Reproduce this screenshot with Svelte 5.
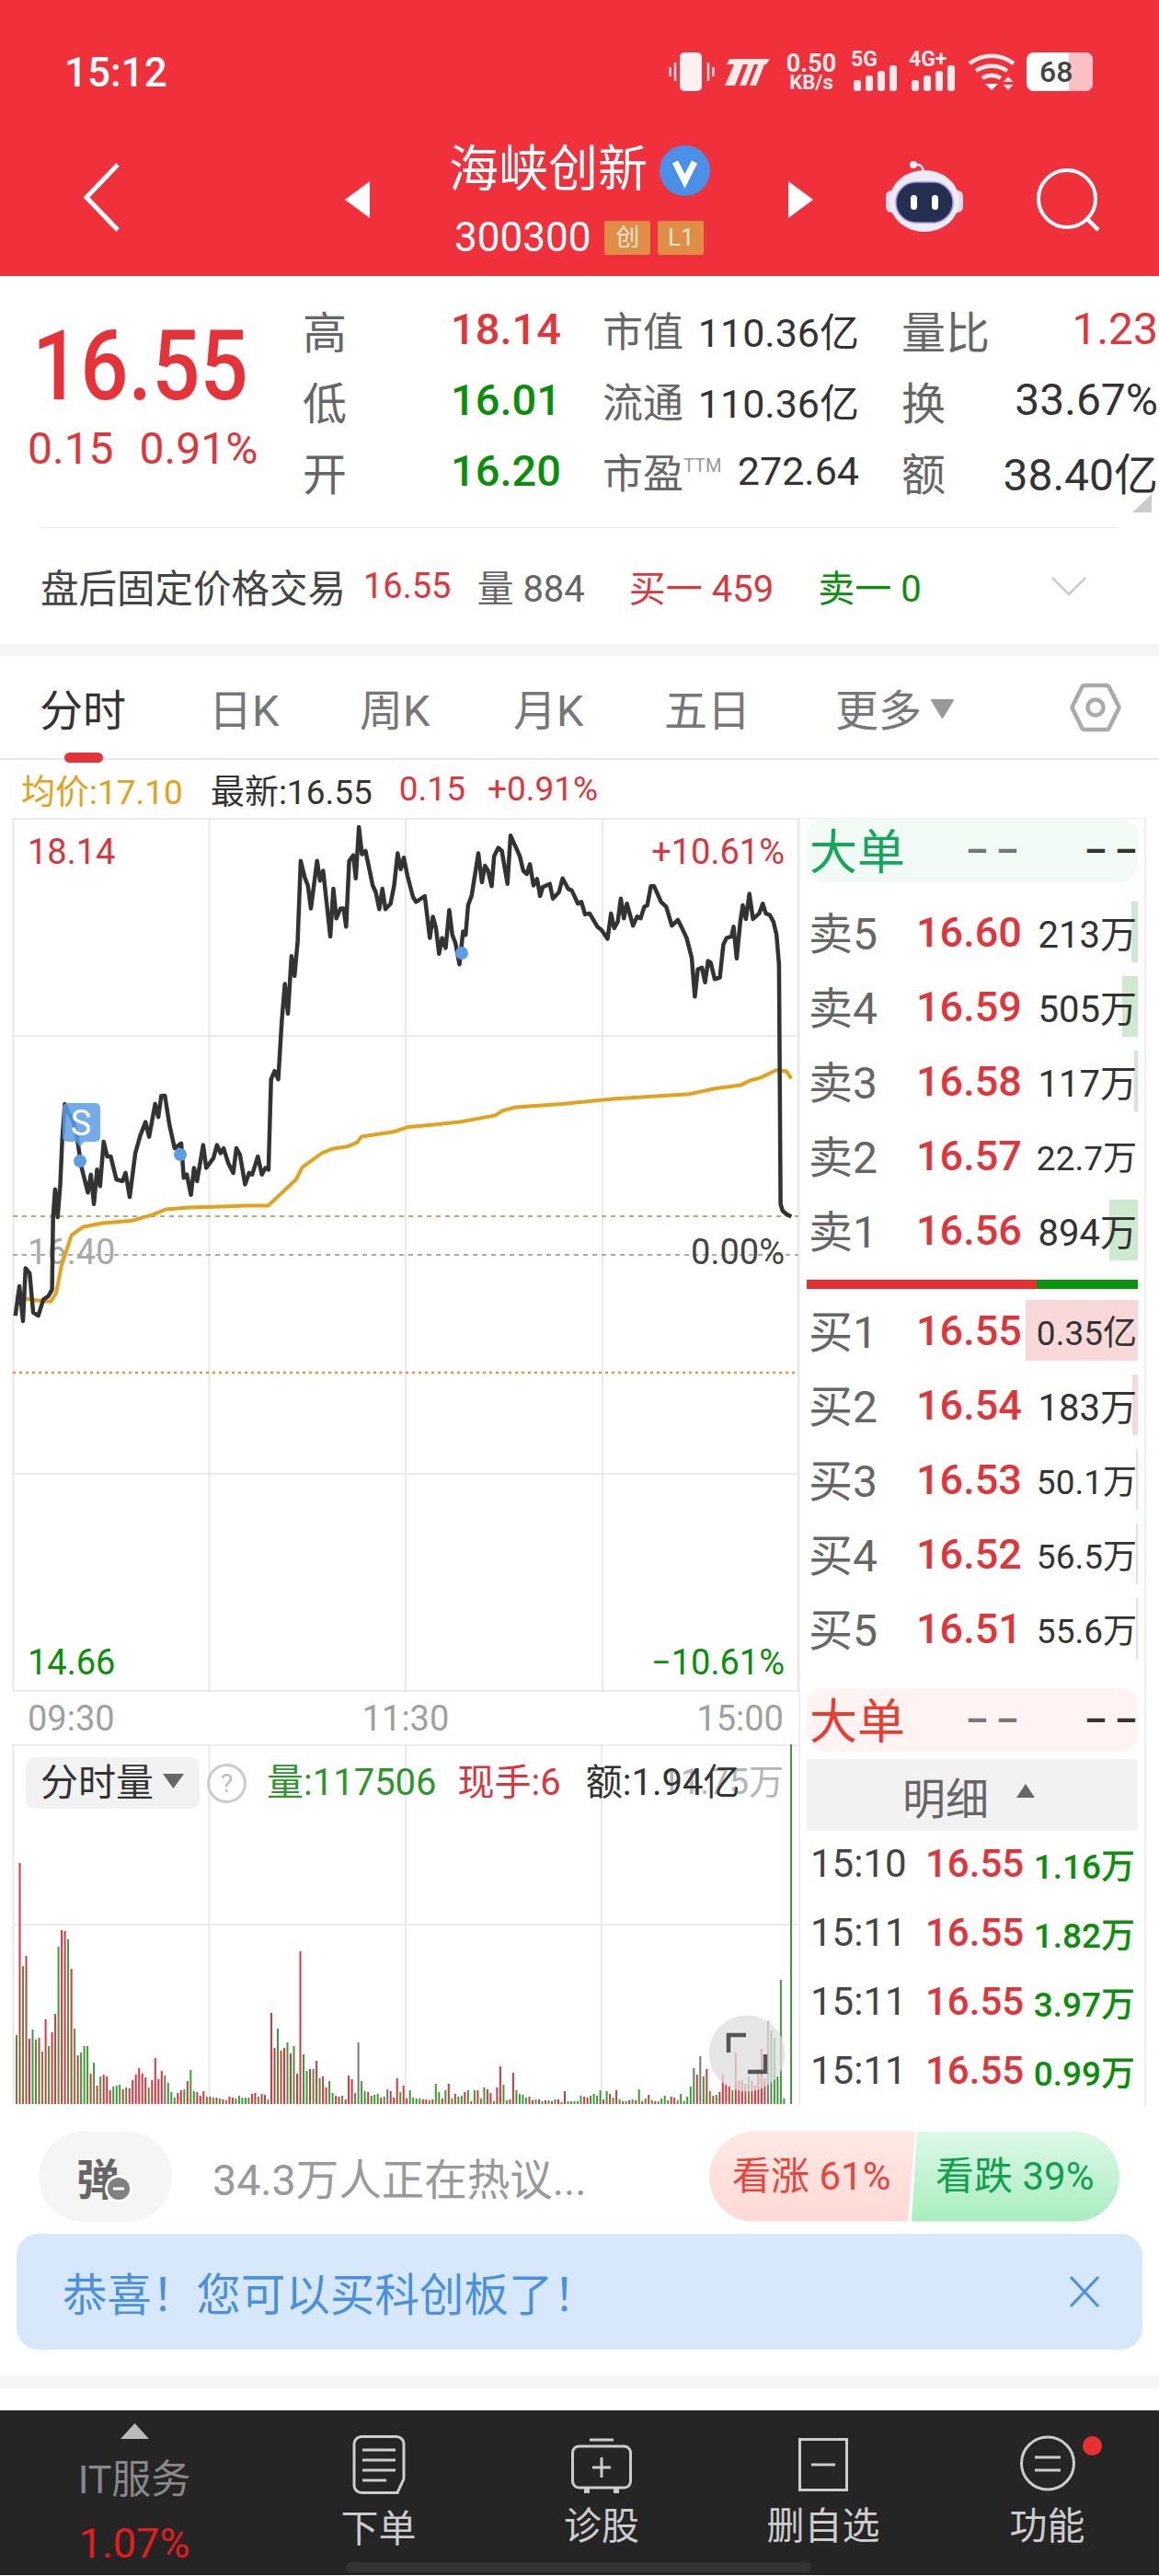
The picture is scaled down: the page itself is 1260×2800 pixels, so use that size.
<script>
    // price line, traced off the chart (crop units, converted below)
    const priceRaw = [30,1600,38,1510,45,1616,50,1455,58,1470,65,1590,75,1600,85,1550,95,1540,102,1520,104,1300,108,1215,113,1300,118,1200,122,1060,127,955,135,985,142,1000,150,1050,155,1100,160,1150,172,1225,178,1170,184,1260,190,1155,196,1205,203,1070,210,1115,217,1115,228,1185,240,1190,246,1165,254,1238,265,1105,275,1050,285,1010,292,1055,304,955,310,995,316,930,323,930,332,1020,342,1090,355,1075,360,1180,366,1170,374,1232,380,1150,386,1190,398,1080,404,1150,418,1120,425,1080,432,1105,438,1090,447,1135,457,1165,463,1090,470,1110,480,1200,488,1165,494,1170,505,1115,513,1170,520,1150,526,1155,531,880,538,855,545,880,552,700,558,590,564,680,571,505,577,565,583,460,589,215,597,265,603,290,609,360,621,215,627,275,633,245,647,445,653,300,659,390,667,360,673,360,678,415,684,215,692,198,697,268,703,112,709,195,716,185,730,290,736,310,743,362,749,300,755,362,765,345,772,290,779,192,785,240,791,205,798,260,809,325,815,340,832,322,842,450,848,385,854,420,860,498,866,450,873,480,880,365,886,440,892,465,900,530,907,430,912,440,917,350,924,320,930,260,937,192,944,280,950,230,956,245,963,292,968,200,976,175,983,185,994,285,1000,138,1008,165,1018,200,1025,245,1032,255,1038,225,1045,290,1052,270,1058,322,1063,295,1077,285,1083,330,1095,310,1102,268,1113,300,1120,305,1132,345,1139,340,1146,378,1155,375,1170,415,1178,425,1190,452,1197,375,1203,420,1210,400,1216,330,1222,390,1228,345,1240,412,1248,385,1255,390,1262,355,1268,350,1275,292,1281,292,1295,340,1305,355,1316,412,1328,395,1336,420,1345,450,1355,510,1361,628,1367,545,1375,540,1381,585,1387,520,1392,525,1400,575,1410,570,1417,470,1423,450,1433,445,1437,415,1443,512,1450,400,1455,350,1461,392,1468,315,1475,392,1487,375,1494,345,1500,375,1508,380,1515,400,1521,440,1526,530,1529,1260,1533,1280,1540,1290,1550,1298];
    const avgRaw = [30,1545,60,1550,85,1556,100,1556,110,1530,120,1450,140,1355,162,1330,200,1318,260,1310,300,1292,325,1276,370,1270,420,1268,480,1265,525,1265,580,1185,592,1148,630,1105,650,1092,680,1085,700,1072,708,1055,770,1040,800,1025,850,1018,900,1010,970,990,985,975,1010,965,1100,955,1200,940,1350,925,1400,908,1450,898,1470,883,1490,875,1520,852,1540,855,1550,878];

    function toPoints(raw) {
        let out = [];
        for (let i = 0; i < raw.length; i += 2) {
            out.push((raw[i] * 0.555).toFixed(1) + "," + (860 + raw[i + 1] * 0.357).toFixed(1));
        }
        return out.join(" ");
    }
    const pricePts = toPoints(priceRaw);
    const avgPts = toPoints(avgRaw);

    const volRaw = "g75 r262 g150 r161 r71 g81 g70 r72 g57 r92 g63 r78 r98 g171 r189 r188 g179 r147 g82 r53 g56 g63 g63 r33 g45 r20 g30 r32 r30 r15 g19 g20 g21 r16 g18 r17 r26 r32 r39 r33 r29 g18 r26 r50 r27 r36 k31 g23 g13 g7 r12 r15 g16 r25 g37 g14 r13 r9 r14 g8 r8 g7 r7 g6 r5 g4 r8 r7 g6 g9 g7 g7 g7 r11 r12 g8 r11 r10 g5 r99 r61 g82 r58 r61 g67 r55 g63 r33 r166 g54 g36 r38 g38 r47 g28 r30 r18 g25 g12 r9 r8 g9 r5 r31 r27 g12 k67 g25 g14 r13 g9 g10 g11 r7 g8 k16 r14 r7 r28 g13 r20 r6 g15 g7 g6 g6 r5 r5 g4 r5 g22 g13 r6 g15 r22 g6 r11 g8 g9 r13 g15 r3 g15 r15 g6 g18 r16 r12 g3 r18 r41 g21 g4 r5 r34 g15 g11 g10 g7 r8 r4 g5 r5 g3 r4 g4 r3 g5 r5 r2 r14 g3 g3 g3 g3 g9 r8 r7 g9 g11 g9 g15 r5 g14 r11 g7 r15 g5 r3 g3 r4 g5 r4 g16 r3 g6 r10 g4 r3 g3 g6 g9 g4 r8 r7 g4 g11 g3 g8 g19 g39 r32 k52 g30 r38 g14 r9 g10 r13 r32 r22 r20 g15 r56 r25 r26 r22 g30 r25 r20 r38 r60 r28 k90 g80 g72 g30 g135 g6";
    const volColors = { r: "#d9363e", g: "#3f9a3a", k: "#777" };
    const volBars = volRaw.split(" ").map((s, i) => ({
        x: (17 + i * 3.506).toFixed(1),
        h: +s.slice(1),
        c: volColors[s[0]],
    }));

    const stats = [
        { l: "高", v: "18.14", vc: "red", l2: "市值", v2: "110.36亿", l3: "量比", v3: "1.23", v3c: "red" },
        { l: "低", v: "16.01", vc: "green", l2: "流通", v2: "110.36亿", l3: "换", v3: "33.67%", v3c: "" },
        { l: "开", v: "16.20", vc: "green", l2: "市盈", ttm: true, v2: "272.64", l3: "额", v3: "38.40亿", v3c: "" },
    ];

    const tabs = ["分时", "日K", "周K", "月K", "五日"];

    const sells = [
        { l: "卖", n: 5, p: "16.60", v: "213万", w: 7 },
        { l: "卖", n: 4, p: "16.59", v: "505万", w: 17 },
        { l: "卖", n: 3, p: "16.58", v: "117万", w: 4 },
        { l: "卖", n: 2, p: "16.57", v: "22.7万", w: 0, small: true },
        { l: "卖", n: 1, p: "16.56", v: "894万", w: 31 },
    ];
    const buys = [
        { l: "买", n: 1, p: "16.55", v: "0.35亿", w: 122, small: true },
        { l: "买", n: 2, p: "16.54", v: "183万", w: 6 },
        { l: "买", n: 3, p: "16.53", v: "50.1万", w: 2, small: true },
        { l: "买", n: 4, p: "16.52", v: "56.5万", w: 2, small: true },
        { l: "买", n: 5, p: "16.51", v: "55.6万", w: 2, small: true },
    ];
    const ticks = [
        { t: "15:10", p: "16.55", v: "1.16万" },
        { t: "15:11", p: "16.55", v: "1.82万" },
        { t: "15:11", p: "16.55", v: "3.97万" },
        { t: "15:11", p: "16.55", v: "0.99万" },
    ];
</script>

<div class="page">
    <header class="head">
        <div class="status">
            <span class="clock">15:12</span>
            <div class="sicons">
                <svg class="s-vib" width="50" height="42" viewBox="0 0 50 42">
                    <rect x="12" y="0" width="24" height="42" rx="5" fill="#fff1f1" />
                    <path d="M7 11v20M1.500 16v10M43 11v20M48.500 16v10" stroke="#ffdcdc" stroke-width="2.500" />
                </svg>
                <svg class="s-m" width="49" height="29" viewBox="0 0 49 29">
                    <path d="M5 0h44l-4 6h-2l-9 23h-7l9-23h-4l-9 23h-7l9-23h-5L11 29H0L10 6H2z" fill="#ffeaea" />
                </svg>
                <div class="s-speed"><span>0.50</span><span>KB/s</span></div>
                <div class="s-net">
                    <span>5G</span>
                    <svg width="47" height="28" viewBox="0 0 47 28"><g fill="#ffeaea"><rect x="0" y="16" width="8" height="12" rx="3" /><rect x="13" y="11" width="8" height="17" rx="3" /><rect x="26" y="6" width="8" height="22" rx="3" /><rect x="39" y="0" width="8" height="28" rx="3" /></g></svg>
                </div>
                <div class="s-net n2">
                    <span>4G+</span>
                    <svg width="47" height="28" viewBox="0 0 47 28"><g fill="#ffeaea"><rect x="0" y="16" width="8" height="12" rx="3" /><rect x="13" y="11" width="8" height="17" rx="3" /><rect x="26" y="6" width="8" height="22" rx="3" /><rect x="39" y="0" width="8" height="28" rx="3" /></g></svg>
                </div>
                <svg class="s-wifi" width="52" height="42" viewBox="0 0 52 42">
                    <path d="M2 12c14-11 34-11 48 0M9 20c10-7 24-7 34 0M16 28c6-4 14-4 20 0" fill="none" stroke="#ffeaea" stroke-width="4.500" />
                    <path d="M19 34h14l-7 7z" fill="#fff" />
                    <path d="M44 26l5.500 6h-11zM38.500 35h11L44 41z" fill="#ffe0e0" />
                </svg>
                <div class="s-bat"><i></i><b>68</b></div>
            </div>
        </div>
        <nav class="topnav">
            <svg class="back" width="39" height="75" viewBox="0 0 39 75">
                <path d="M37 2 3 37.500 37 73" fill="none" stroke="#fff" stroke-width="5" />
            </svg>
            <svg class="tri-l" width="27" height="40" viewBox="0 0 27 40"><path d="M27 0v40L0 20z" fill="#fff" /></svg>
            <div class="title">
                <div class="name"><span>海峡创新</span>
                    <svg width="55" height="55" viewBox="0 0 55 55">
                        <circle cx="27.500" cy="27.500" r="27.500" fill="#4a90e8" />
                        <path d="M17 18l10.500 21L38 18" fill="none" stroke="#fff" stroke-width="7" />
                    </svg>
                </div>
                <div class="code"><span>300300</span><em>创</em><em>L1</em></div>
            </div>
            <svg class="tri-r" width="27" height="40" viewBox="0 0 27 40"><path d="M0 0v40l27-20z" fill="#fff" /></svg>
            <svg class="robot" width="84" height="78" viewBox="0 0 84 78">
                <path d="M31 4c6-1 9 2 10 7" fill="none" stroke="#e6e2f6" stroke-width="2.500" />
                <circle cx="30" cy="4" r="4" fill="#f1eefb" />
                <rect x="0" y="32" width="84" height="24" rx="6" fill="#dcd9f0" />
                <ellipse cx="42" cy="43.500" rx="38" ry="33.500" fill="#ecebfa" />
                <rect x="11" y="23" width="62" height="44" rx="22" fill="#252f50" stroke="#9c8cea" stroke-width="1.500" />
                <rect x="27" y="37" width="7" height="16" rx="3.500" fill="#fff" />
                <rect x="50" y="37" width="7" height="16" rx="3.500" fill="#fff" />
            </svg>
            <svg class="search" width="70" height="72" viewBox="0 0 70 72">
                <circle cx="33" cy="33" r="31" fill="none" stroke="#fff" stroke-width="4" />
                <path d="M55 55l12 12" stroke="#fff" stroke-width="4.500" />
            </svg>
        </nav>
    </header>

    <section class="quote">
        <div class="price-col">
            <div class="big">16.55</div>
            <div class="chg"><span>0.15</span><span>0.91%</span></div>
        </div>
        <div class="stat-grid">
            {#each stats as s}
                <span class="s-l">{s.l}</span>
                <span class="s-v {s.vc}">{s.v}</span>
                <span class="s-mid">
                    <span class="m-l">{s.l2}{#if s.ttm}<sup>TTM</sup>{/if}</span>
                    <span class="m-v">{s.v2}</span>
                </span>
                <span class="s-last">
                    <span class="s-l">{s.l3}</span>
                    <span class="l-v {s.v3c}">{s.v3}</span>
                </span>
            {/each}
        </div>
        <svg class="corner" width="21" height="20" viewBox="0 0 21 20"><path d="M21 0v20H0z" fill="#ccc" /></svg>
    </section>
    <div class="divider"></div>
    <section class="after">
        <span class="a-t">盘后固定价格交易</span>
        <span class="red a-p">16.55</span>
        <span class="a-q">量 884</span>
        <span class="red a-b">买一 459</span>
        <span class="green a-s">卖一 0</span>
        <svg class="a-chev" width="38" height="21" viewBox="0 0 38 21"><path d="M1 1l18 18L37 1" fill="none" stroke="#ccc" stroke-width="2.500" /></svg>
    </section>
    <div class="band"></div>

    <section class="tabs">
        {#each tabs as t, i}
            <span class="tab" class:active={i === 0}>{t}</span>
        {/each}
        <span class="tab more">更多<svg width="25" height="21" viewBox="0 0 25 21"><path d="M1 1h23L12.500 20z" fill="#999" stroke="#999" stroke-width="2" stroke-linejoin="round" /></svg></span>
        <svg class="hex" width="56" height="54" viewBox="0 0 56 54">
            <path d="M16 3h24a3 3 0 0 1 2.600 1.500L53 25.500a3 3 0 0 1 0 3L42.600 49.500A3 3 0 0 1 40 51H16a3 3 0 0 1-2.600-1.500L3 28.500a3 3 0 0 1 0-3L13.400 4.500A3 3 0 0 1 16 3z" fill="none" stroke="#aaa" stroke-width="4.500" />
            <circle cx="28" cy="27" r="8.500" fill="none" stroke="#aaa" stroke-width="4.500" />
        </svg>
    </section>

    <div class="info">
        <span class="avg">均价:17.10</span>
        <span class="last">最新:16.55</span>
        <span class="red inf-chg">0.15</span>
        <span class="red inf-pct">+0.91%</span>
    </div>

    <main class="main">
        <div class="left">
            <svg class="chart" width="868" height="950" viewBox="0 890 868 950">
                <g stroke="#e4e4e4" stroke-width="1.500" fill="none">
                    <path d="M14 890.800H868M14 1839H868" stroke-width="2.500" stroke="#ececec" />
                    <path d="M14.500 890V1840M227.500 890V1840M441 890V1840M655 890V1840M867.500 890V1840" />
                    <path d="M14 1127H868M14 1603H868" />
                </g>
                <path d="M14 1323H868" stroke="#b9a77f" stroke-width="2" stroke-dasharray="5 5" />
                <path d="M14 1365H868" stroke="#aaa" stroke-width="2" stroke-dasharray="5 5" />
                <path d="M14 1493H868" stroke="#e8924a" stroke-width="2.500" stroke-dasharray="3 4" />

                <text x="30" y="940" class="ct redf">18.14</text>
                <text x="853" y="940" text-anchor="end" class="ct redf">+10.61%</text>
                <text x="30" y="1375" class="ct" fill="#aaa">16.40</text>
                <text x="853" y="1375" text-anchor="end" class="ct" fill="#444">0.00%</text>
                <text x="30" y="1821" class="ct greenf">14.66</text>
                <text x="853" y="1821" text-anchor="end" class="ct greenf">−10.61%</text>

                <polyline points={avgPts} fill="none" stroke="#e3a11c" stroke-width="4" stroke-linejoin="round" />
                <polyline points={pricePts} fill="none" stroke="#333" stroke-width="4.500" stroke-linejoin="round" />

                <path d="M73 1200h31a5 5 0 0 1 5 5v32a5 5 0 0 1-5 5h-13l-4 6-4-6H73a5 5 0 0 1-5-5v-32a5 5 0 0 1 5-5z" fill="#5c9ce8" opacity=".85" />
                <text x="88" y="1235" text-anchor="middle" class="ct" fill="#fff">S</text>
                <circle cx="87" cy="1263" r="7" fill="#5c9ce8" />
                <circle cx="196" cy="1256" r="7" fill="#5c9ce8" />
                <circle cx="502" cy="1037" r="7" fill="#5c9ce8" />
            </svg>

            <div class="axis"><span>09:30</span><span>11:30</span><span>15:00</span></div>

            <div class="volbox">
                <svg class="volsvg" width="868" height="393" viewBox="0 1897 868 393">
                    <g stroke="#e4e4e4" stroke-width="1.500" fill="none">
                        <path d="M14 1897.800H868" stroke="#ececec" stroke-width="2.500" />
                        <path d="M14.500 1897V2288M227.500 1897V2288M441 1897V2288M654 1897V2288" />
                        <path d="M14 2093H868" stroke="#ececec" stroke-width="2" />
                    </g>
                    {#each volBars as b}
                        <rect x={b.x} y={2288 - b.h} width="2" height={b.h} fill={b.c} />
                    {/each}
                    <rect x="859" y="1897" width="2" height="391" fill="#3f9a3a" />
                </svg>
                <span class="vol-ghost">11.75万</span>
                <div class="volhead">
                    <span class="chip">分时量<svg width="23" height="16" viewBox="0 0 23 16"><path d="M0 0h23L11.500 16z" fill="#666" /></svg></span>
                    <span class="help">?</span>
                    <span class="v1">量:117506</span>
                    <span class="v2">现手:6</span>
                    <span class="v3">额:1.94亿</span>
                </div>
                <svg class="expand" width="84" height="84" viewBox="0 0 84 84">
                    <circle cx="42" cy="42" r="41.500" fill="#dedede" opacity=".75" />
                    <path d="M22 41V22h19M62 43v19H43" fill="none" stroke="#555" stroke-width="4.500" />
                </svg>
            </div>
        </div>

        <aside class="depth">
            <div class="bigbar up"><span class="b-t">大单</span><span class="dash d1">––</span><span class="dash d2">––</span></div>
            <div class="rows first">
                {#each sells as r}
                    <div class="row">
                        {#if r.w}<i class="bar sell" style="width:{r.w}px"></i>{/if}
                        <span class="r-l">{r.l}{r.n}</span>
                        <span class="r-p">{r.p}</span>
                        <span class="r-v" class:small={r.small}>{r.v}</span>
                    </div>
                {/each}
            </div>
            <div class="split"><i></i><b></b></div>
            <div class="rows second">
                {#each buys as r}
                    <div class="row">
                        {#if r.w}<i class="bar buy" style="width:{r.w}px"></i>{/if}
                        <span class="r-l">{r.l}{r.n}</span>
                        <span class="r-p">{r.p}</span>
                        <span class="r-v" class:small={r.small}>{r.v}</span>
                    </div>
                {/each}
            </div>
            <div class="bigbar dn"><span class="b-t">大单</span><span class="dash d1">––</span><span class="dash d2">––</span></div>
            <div class="detail-h">明细<svg width="20" height="15" viewBox="0 0 20 15"><path d="M10 0l10 15H0z" fill="#666" /></svg></div>
            <div class="ticks">
                {#each ticks as k}
                    <div class="tick">
                        <span class="t-t">{k.t}</span>
                        <span class="t-p">{k.p}</span>
                        <span class="t-v">{k.v}</span>
                    </div>
                {/each}
            </div>
        </aside>
    </main>

    <section class="talk">
        <div class="danmu">弹
            <svg width="30" height="30" viewBox="0 0 30 30"><circle cx="15" cy="15" r="13.500" fill="#808080" stroke="#fff" stroke-width="3" /><path d="M9 15h12" stroke="#fff" stroke-width="3" /></svg>
        </div>
        <span class="talk-t">34.3万人正在热议...</span>
        <div class="vote">
            <span class="up-v">看涨 61%</span>
            <span class="dn-v">看跌 39%</span>
        </div>
    </section>
    <div class="notice">
        <span>恭喜！您可以买科创板了！</span>
        <svg width="34" height="34" viewBox="0 0 34 34"><path d="M2 1l30 32M32 1 2 33" stroke="#4a90e2" stroke-width="3" /></svg>
    </div>
    <div class="band b2"></div>

    <footer class="foot">
        <div class="f-sector">
            <svg width="31" height="17" viewBox="0 0 31 17"><path d="M15.500 0 31 17H0z" fill="#bbb" /></svg>
            <span class="f-name">IT服务</span>
            <span class="f-pct">1.07%</span>
        </div>
        <div class="f-item f1">
            <svg width="58" height="64" viewBox="0 0 58 64">
                <path d="M10 1.500h38a8 8 0 0 1 8 8v38l-7 15H10a8 8 0 0 1-8-8v-45a8 8 0 0 1 8-8z" fill="none" stroke="#ccc" stroke-width="3" />
                <path d="M11 16h36M11 27h36M11 38h36M11 49h26" stroke="#ccc" stroke-width="3" />
            </svg>
            <span>下单</span>
        </div>
        <div class="f-item f2">
            <svg width="66" height="61" viewBox="0 0 66 61">
                <path d="M20 2h26" stroke="#ccc" stroke-width="3" />
                <rect x="1.500" y="9" width="63" height="45" rx="7" fill="none" stroke="#ccc" stroke-width="3" />
                <path d="M33 21v22M23 32h20" stroke="#ccc" stroke-width="3" />
                <path d="M14 54v6h6v-6M46 54v6h6v-6" fill="#ccc" />
            </svg>
            <span>诊股</span>
        </div>
        <div class="f-item f3">
            <svg width="54" height="61" viewBox="0 0 54 61">
                <rect x="1.500" y="1.500" width="51" height="55" fill="none" stroke="#ccc" stroke-width="3" />
                <path d="M14 29h26" stroke="#ccc" stroke-width="3" />
            </svg>
            <span>删自选</span>
        </div>
        <div class="f-item f4">
            <svg width="60" height="61" viewBox="0 0 60 61">
                <circle cx="30" cy="30.500" r="28.500" fill="none" stroke="#ccc" stroke-width="3" />
                <path d="M16 24h28M16 38h28" stroke="#ccc" stroke-width="3" />
            </svg>
            <span>功能</span>
            <i class="dot"></i>
        </div>
        <div class="homebar"></div>
    </footer>
</div>

<style>
    :global(body) {
        margin: 0;
        background: #fff;
    }

    .page {
        width: 1260px;
        height: 2800px;
        overflow: hidden;
        display: flex;
        flex-direction: column;
        font-family: Roboto, "Noto Sans CJK SC", sans-serif;
        color: #333;
    }

    .red { color: #e0353a; }
    .green { color: #0a8f0a; }

    /* header */
    .head {
        height: 300px;
        background: #f0313c;
        color: #fff;
        flex: none;
    }

    .status {
        height: 158px;
        display: flex;
        align-items: center;
        position: relative;
    }

    .clock {
        margin-left: 70px;
        font-size: 44px;
        font-weight: 500;
    }

    .sicons {
        position: absolute;
        left: 727px;
        top: 57px;
        height: 42px;
        display: flex;
        align-items: flex-end;
    }

    .s-m { margin: 0 0 6px 11px; }

    .s-speed {
        margin-left: 18px;
        width: 54px;
        height: 42px;
        display: flex;
        flex-direction: column;
        align-items: center;
        font-size: 27px;
        font-weight: 700;
        line-height: 24px;
        color: #ffeaea;
    }

    .s-speed span:last-child { font-size: 22px; line-height: 18px; }

    .s-net {
        position: relative;
        margin-left: 19px;
        width: 47px;
        height: 42px;
        display: flex;
        align-items: flex-end;
        color: #ffeaea;
    }

    .s-net span {
        position: absolute;
        left: -3px;
        top: -3px;
        font-size: 23px;
        font-weight: 700;
        line-height: 22px;
    }

    .s-net.n2 { margin-left: 16px; }
    .s-wifi { margin-left: 14px; }

    .s-bat {
        position: relative;
        margin-left: 12px;
        width: 72px;
        height: 42px;
        background: #fff;
        border-radius: 8px;
        color: #444;
        overflow: hidden;
        display: flex;
        align-items: center;
    }

    .s-bat i {
        position: absolute;
        right: 0;
        top: 0;
        bottom: 0;
        width: 26px;
        background: #fcc0c4;
    }

    .s-bat b {
        position: relative;
        margin-left: 14px;
        font-size: 32px;
        font-weight: 500;
        line-height: 42px;
    }

    .topnav {
        height: 142px;
        display: flex;
        align-items: flex-start;
    }

    .back { margin: 19px 0 0 91px; }
    .tri-l { margin: 39px 0 0 245px; }
    .tri-r { margin: 39px 0 0 0; }
    .robot { margin: 17px 0 0 79px; }
    .search { margin: 25px 0 0 80px; }

    .title {
        width: 455px;
        padding-left: 86px;
        box-sizing: border-box;
    }

    .name {
        height: 56px;
        margin-top: -1px;
        display: flex;
        align-items: center;
        gap: 13px;
        font-size: 54px;
        line-height: 56px;
    }

    .code {
        margin-top: 27px;
        display: flex;
        align-items: center;
        font-size: 44px;
        line-height: 37px;
        padding-left: 6px;
    }

    .code em {
        font-style: normal;
        width: 50px;
        height: 37px;
        margin-left: 8px;
        background: #e08e45;
        border-radius: 2px;
        color: #ffe9d2;
        font-size: 26px;
        text-align: center;
    }

    .code em:first-of-type { margin-left: 15px; }

    /* quote */
    .quote {
        height: 273px;
        display: flex;
        position: relative;
        flex: none;
    }

    .price-col {
        width: 329px;
        flex: none;
        padding-left: 30px;
        box-sizing: border-box;
    }

    .big {
        margin: 45px 0 0 5px;
        font-size: 92px;
        line-height: 108px;
        font-weight: 500;
        transform: scaleY(1.14);
        transform-origin: 0 50%;
        color: #e6333a;
    }

    .chg {
        margin-top: 8px;
        display: flex;
        gap: 28px;
        font-size: 48px;
        line-height: 54px;
        color: #e0353a;
    }

    .stat-grid {
        margin-top: 19px;
        display: grid;
        grid-template-columns: 161px 165px 325px 279px;
        grid-auto-rows: 77px;
        align-items: center;
    }

    .s-l {
        font-size: 48px;
        color: #666;
    }

    .s-v {
        font-size: 47px;
        font-weight: 500;
    }

    .s-mid {
        display: flex;
        justify-content: space-between;
        align-items: center;
        padding-right: 46px;
    }

    .m-l {
        font-size: 44px;
        color: #666;
    }

    .m-l sup {
        font-size: 20px;
        color: #999;
        vertical-align: 18px;
        line-height: 0;
    }

    .m-v {
        font-size: 43px;
        color: #333;
    }

    .s-last {
        display: flex;
        justify-content: space-between;
        align-items: center;
    }

    .l-v { font-size: 48px; color: #333; }
    .l-v.red { color: #e0353a; }

    .corner {
        position: absolute;
        left: 1231px;
        top: 237px;
    }

    .divider {
        height: 1px;
        margin: 0 43px 0 42px;
        background: #ececec;
        flex: none;
    }

    .after {
        height: 126px;
        position: relative;
        display: flex;
        align-items: center;
        font-size: 40px;
        flex: none;
    }

    .a-t { margin-left: 44px; font-size: 41.500px; color: #444; }
    .a-p { margin-left: 19px; font-size: 38px; }
    .a-q { margin-left: 28px; color: #666; }
    .a-b { margin-left: 48px; }
    .a-s { margin-left: 48px; }
    .a-chev { position: absolute; left: 1143px; top: 53px; }

    .band {
        height: 13px;
        background: #f5f5f5;
        flex: none;
    }

    /* tabs */
    .tabs {
        height: 113px;
        padding-left: 43px;
        box-sizing: border-box;
        border-bottom: 2px solid #e8e8e8;
        display: grid;
        grid-template-columns: 184px 164px 167px 164px 186px 255px auto;
        align-items: center;
        font-size: 47px;
        color: #777;
        flex: none;
        position: relative;
    }

    .tab { position: relative; }
    .tab.active { color: #333; }

    .tab.active::after {
        content: "";
        position: absolute;
        left: 27px;
        bottom: -26px;
        width: 42px;
        height: 11px;
        border-radius: 6px;
        background: #e6333a;
    }

    .more svg { margin-left: 10px; vertical-align: 8px; }

    .info {
        height: 63px;
        display: flex;
        align-items: center;
        padding-left: 23px;
        font-size: 37px;
        flex: none;
    }

    .avg { color: #e3a11c; }
    .last { margin-left: 30px; color: #333; }
    .inf-chg { margin-left: 29px; }
    .inf-pct { margin-left: 24px; }

    /* chart + depth */
    .main {
        height: 1400px;
        display: flex;
        flex: none;
    }

    .left {
        width: 868px;
        flex: none;
    }

    .chart, .volsvg { display: block; }

    .ct {
        font-size: 38px;
        font-family: Roboto, sans-serif;
    }

    .redf { fill: #d9363e; }
    .greenf { fill: #0a8f0a; }

    .axis {
        height: 57px;
        padding: 0 16px 0 30px;
        display: flex;
        justify-content: space-between;
        align-items: center;
        font-size: 38px;
        color: #a0a0a0;
    }

    .volbox {
        position: relative;
        height: 393px;
    }

    .volsvg { position: absolute; left: 0; top: 0; }

    .vol-ghost {
        position: absolute;
        right: 16px;
        top: 10px;
        font-size: 38px;
        color: #b5b5b5;
    }

    .volhead {
        position: relative;
        padding: 14px 0 0 28px;
        display: flex;
        align-items: center;
        font-size: 40px;
        line-height: 56px;
    }

    .chip {
        width: 189px;
        height: 56px;
        padding-left: 16px;
        box-sizing: border-box;
        border-radius: 10px;
        background: #f2f2f2;
        font-size: 41px;
        white-space: nowrap;
    }

    .chip svg { margin-left: 10px; vertical-align: 8px; }

    .help {
        width: 37px;
        height: 37px;
        margin-left: 8px;
        border: 3px solid #ccc;
        border-radius: 50%;
        color: #bbb;
        font-size: 28px;
        line-height: 37px;
        text-align: center;
    }

    .v1 { margin-left: 22px; color: #2c962c; }
    .v2 { margin-left: 23px; color: #d9363e; }
    .v3 { margin-left: 27px; color: #333; }

    .expand { position: absolute; left: 770px; top: 294px; }

    .depth {
        width: 378px;
        height: 1400px;
        padding: 0 7px;
        box-sizing: border-box;
        border-left: 2px solid #efefef;
        border-right: 2px solid #efefef;
        border-top: 1px solid #efefef;
        flex: none;
    }

    .bigbar {
        height: 69px;
        border-radius: 20px;
        display: flex;
        align-items: center;
        padding-left: 3px;
        position: relative;
        font-size: 52px;
    }

    .b-t { position: relative; top: -2px; }
    .bigbar.up { background: #f1faf5; color: #14a85a; }
    .bigbar.dn { margin-top: 32px; background: #fff3f3; color: #ee3b30; }

    .dash {
        position: absolute;
        font-size: 38px;
        font-weight: 700;
        letter-spacing: 9px;
    }

    .d1 { left: 173px; color: #777; }
    .d2 { left: 302px; color: #333; }

    .rows {
        display: flex;
        flex-direction: column;
        gap: 15px;
    }

    .rows.first { margin-top: 21px; }
    .rows.second { margin-top: 12px; }

    .row {
        position: relative;
        height: 66px;
        display: flex;
        align-items: center;
    }

    .bar {
        position: absolute;
        right: 0;
        top: 0;
        bottom: 0;
    }

    .bar.sell { background: #cfe9cf; }
    .bar.buy { background: #f8d8d8; }

    .r-l {
        position: relative;
        top: -2px;
        width: 119px;
        padding-left: 2px;
        box-sizing: border-box;
        font-size: 48px;
        color: #666;
    }

    .r-p {
        position: relative;
        font-size: 45px;
        font-weight: 500;
        color: #e0353a;
    }

    .r-v {
        position: relative;
        margin-left: auto;
        margin-right: 1px;
        font-size: 40px;
        color: #333;
    }

    .r-v.small { font-size: 37px; }

    .split {
        margin-top: 21px;
        height: 10px;
        display: flex;
    }

    .split i { width: 250px; background: #e63030; }
    .split b { flex: 1; background: #0a960a; }

    .detail-h {
        margin-top: 8px;
        height: 78px;
        background: #f2f2f2;
        padding-left: 104px;
        display: flex;
        align-items: center;
        font-size: 47px;
        color: #666;
    }

    .detail-h svg { margin: 0 0 10px 30px; }

    .ticks { margin-top: -2px; }

    .tick {
        height: 75px;
        display: flex;
        align-items: center;
        padding: 0 3px 0 4px;
    }

    .t-t { font-size: 42px; color: #444; width: 125px; }
    .t-p { font-size: 42px; font-weight: 500; color: #e0353a; }
    .t-v { margin-left: auto; font-size: 37px; color: #0a8f0a; font-weight: 500; }

    /* comment row */
    .talk {
        height: 139px;
        flex: none;
        display: flex;
        align-items: center;
        padding: 14px 0 0 42px;
        box-sizing: border-box;
    }

    .danmu {
        position: relative;
        width: 145px;
        height: 98px;
        background: #f5f5f5;
        border-radius: 49px;
        display: flex;
        align-items: center;
        padding-left: 41px;
        box-sizing: border-box;
        font-size: 47px;
        font-weight: 700;
        color: #666;
        flex: none;
    }

    .danmu svg {
        position: absolute;
        left: 72px;
        top: 47px;
    }

    .talk-t {
        margin-left: 44px;
        font-size: 46.500px;
        color: #999;
        width: 540px;
        white-space: nowrap;
    }

    .vote {
        display: flex;
        height: 98px;
        font-size: 42px;
        line-height: 98px;
    }

    .up-v {
        width: 224px;
        padding-left: 25px;
        box-sizing: border-box;
        background: linear-gradient(#ffe9e5, #ffd9d5);
        border-radius: 49px 0 0 49px;
        clip-path: polygon(0 0, 100% 0, calc(100% - 8px) 100%, 0 100%);
        color: #e8453c;
    }

    .dn-v {
        width: 226px;
        margin-left: -4px;
        padding-left: 26px;
        box-sizing: border-box;
        background: linear-gradient(#dcf9e6, #a9edc0);
        border-radius: 0 49px 49px 0;
        clip-path: polygon(6px 0, 100% 0, 100% 100%, 0 100%);
        color: #10a050;
    }

    .notice {
        height: 126px;
        margin: 0 18px;
        padding: 0 46px 0 50px;
        flex: none;
        background: #d7e8fb;
        border-radius: 24px;
        display: flex;
        justify-content: space-between;
        align-items: center;
        font-size: 48.500px;
        color: #4a90e2;
    }

    .band.b2 { margin-top: 28px; height: 14px; }

    /* bottom nav */
    .foot {
        margin-top: 24px;
        height: 179px;
        flex: none;
        background: #252525;
        position: relative;
        color: #ccc;
    }

    .f-sector {
        position: absolute;
        left: 85px;
        top: 14px;
        width: 122px;
        display: flex;
        flex-direction: column;
        align-items: center;
    }

    .f-name {
        margin-top: 17px;
        font-size: 43px;
        line-height: 54px;
        color: #888;
        white-space: nowrap;
    }

    .f-pct {
        margin-top: 16px;
        font-size: 45px;
        line-height: 54px;
        color: #e51c1c;
    }

    .f-item {
        position: absolute;
        top: 27px;
        display: flex;
        flex-direction: column;
        align-items: center;
        font-size: 41px;
        line-height: 50px;
    }

    .f-item span { margin-top: 13px; white-space: nowrap; }
    .f1 { left: 371px; width: 81px; }
    .f2 { left: 614px; width: 80px; }
    .f3 { left: 834px; width: 122px; }
    .f4 { left: 1098px; width: 81px; }
    .f-item.f2 svg, .f-item.f3 svg { margin-top: 3px; }
    .f-item.f2 span, .f-item.f3 span { margin-top: 10px; }

    .dot {
        position: absolute;
        left: 79px;
        top: 1px;
        width: 21px;
        height: 21px;
        border-radius: 50%;
        background: #e83030;
    }

    .homebar {
        position: absolute;
        left: 376px;
        top: 165px;
        width: 506px;
        height: 11px;
        border-radius: 6px;
        background: #333;
    }
</style>
